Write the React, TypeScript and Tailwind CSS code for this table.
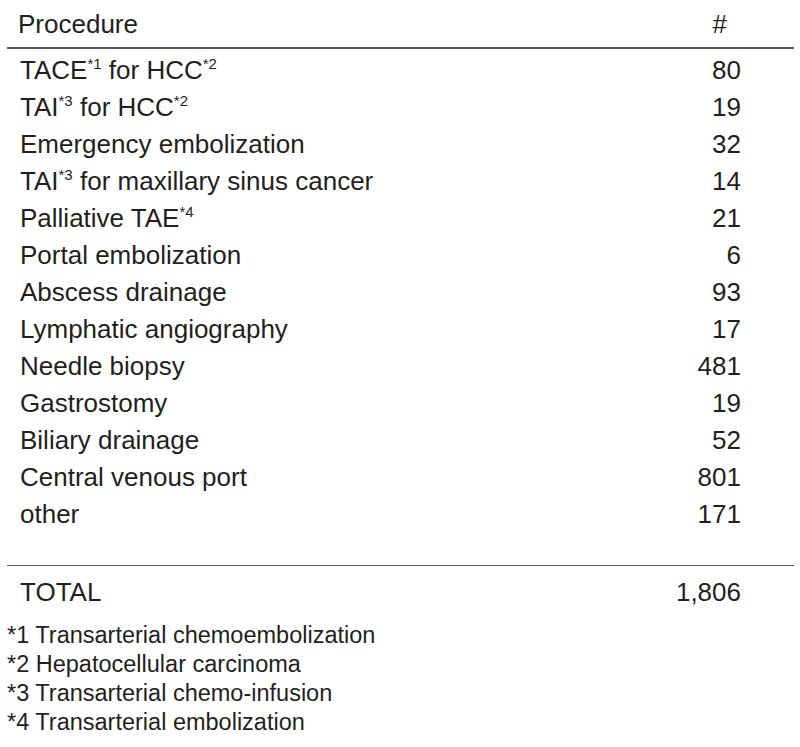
import React from "react";

const Sup = ({ c }: { c: string }) => (
  <span className="text-[15px] leading-none relative -top-[10px]">{c}</span>
);

const rows: { label: React.ReactNode; n: string }[] = [
  { label: <>TACE<Sup c="*1" /> for HCC<Sup c="*2" /></>, n: "80" },
  { label: <>TAI<Sup c="*3" /> for HCC<Sup c="*2" /></>, n: "19" },
  { label: "Emergency embolization", n: "32" },
  { label: <>TAI<Sup c="*3" /> for maxillary sinus cancer</>, n: "14" },
  { label: <>Palliative TAE<Sup c="*4" /></>, n: "21" },
  { label: "Portal embolization", n: "6" },
  { label: "Abscess drainage", n: "93" },
  { label: "Lymphatic angiography", n: "17" },
  { label: "Needle biopsy", n: "481" },
  { label: "Gastrostomy", n: "19" },
  { label: "Biliary drainage", n: "52" },
  { label: "Central venous port", n: "801" },
  { label: "other", n: "171" },
];

const notes = [
  "*1 Transarterial chemoembolization",
  "*2 Hepatocellular carcinoma",
  "*3 Transarterial chemo-infusion",
  "*4 Transarterial embolization",
];

export default function App() {
  return (
    <div
      className="w-[800px] h-[747px] bg-white text-[#231f20] pl-[7px] pr-[6px] overflow-hidden"
      style={{ fontFamily: '"Liberation Sans", Arial, sans-serif' }}
    >
      <div className="flex items-center justify-between h-[47px] text-[26px] leading-none pl-[11px] pr-[67px]">
        <span>Procedure</span>
        <span>#</span>
      </div>
      <div className="h-[1.5px] bg-[#5a5a5a]" />
      <div className="pt-[3px] pb-[32px]">
        {rows.map((r, i) => (
          <div key={i} className="flex items-center justify-between h-[37px] text-[26px] leading-none pl-[13px] pr-[53px]">
            <span>{r.label}</span>
            <span>{r.n}</span>
          </div>
        ))}
      </div>
      <div className="h-[1.5px] bg-[#5a5a5a]" />
      <div className="flex items-center justify-between h-[52px] text-[26px] leading-none pl-[13px] pr-[53px]">
        <span>TOTAL</span>
        <span>1,806</span>
      </div>
      <div className="pt-[3px] flex flex-col">
        {notes.map((t, i) => (
          <div key={i} className="h-[29px] flex items-center text-[23.5px] leading-none">
            {t}
          </div>
        ))}
      </div>
    </div>
  );
}
